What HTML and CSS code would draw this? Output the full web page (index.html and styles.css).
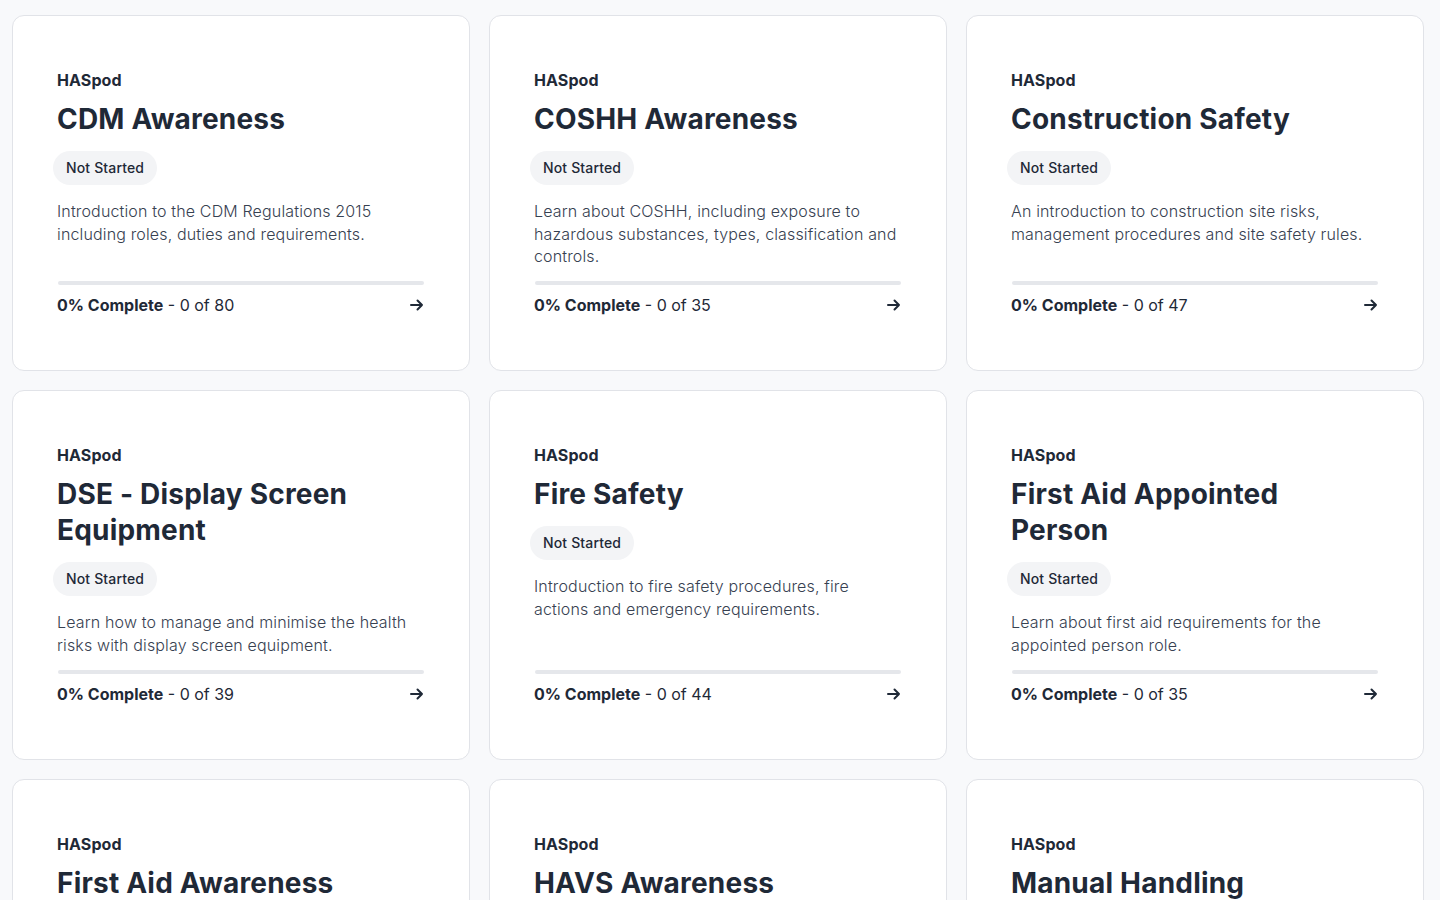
FILE: index.html
```html
<!DOCTYPE html>
<html lang="en">
<head>
<meta charset="utf-8">
<title>Courses</title>
<link rel="stylesheet" href="styles.css">
</head>
<body>
<main class="grid">
  <article class="card">
    <div class="provider">HASpod</div>
    <h2 class="title">CDM Awareness</h2>
    <span class="badge">Not Started</span>
    <p class="desc">Introduction to the CDM Regulations 2015 including roles, duties and requirements.</p>
    <div class="bar"></div>
    <div class="foot"><span><b>0% Complete</b> - 0 of 80</span><svg class="arrow" viewBox="0 0 14 12" width="14" height="12"><path d="M1 6h11M7.5 1.5L12 6l-4.5 4.5" fill="none" stroke="#1f2937" stroke-width="2" stroke-linecap="round" stroke-linejoin="round"/></svg></div>
  </article>
  <article class="card">
    <div class="provider">HASpod</div>
    <h2 class="title">COSHH Awareness</h2>
    <span class="badge">Not Started</span>
    <p class="desc">Learn about COSHH, including exposure to hazardous substances, types, classification and controls.</p>
    <div class="bar"></div>
    <div class="foot"><span><b>0% Complete</b> - 0 of 35</span><svg class="arrow" viewBox="0 0 14 12" width="14" height="12"><path d="M1 6h11M7.5 1.5L12 6l-4.5 4.5" fill="none" stroke="#1f2937" stroke-width="2" stroke-linecap="round" stroke-linejoin="round"/></svg></div>
  </article>
  <article class="card">
    <div class="provider">HASpod</div>
    <h2 class="title">Construction Safety</h2>
    <span class="badge">Not Started</span>
    <p class="desc">An introduction to construction site risks, management procedures and site safety rules.</p>
    <div class="bar"></div>
    <div class="foot"><span><b>0% Complete</b> - 0 of 47</span><svg class="arrow" viewBox="0 0 14 12" width="14" height="12"><path d="M1 6h11M7.5 1.5L12 6l-4.5 4.5" fill="none" stroke="#1f2937" stroke-width="2" stroke-linecap="round" stroke-linejoin="round"/></svg></div>
  </article>
  <article class="card">
    <div class="provider">HASpod</div>
    <h2 class="title">DSE - Display Screen Equipment</h2>
    <span class="badge">Not Started</span>
    <p class="desc">Learn how to manage and minimise the health risks with display screen equipment.</p>
    <div class="bar"></div>
    <div class="foot"><span><b>0% Complete</b> - 0 of 39</span><svg class="arrow" viewBox="0 0 14 12" width="14" height="12"><path d="M1 6h11M7.5 1.5L12 6l-4.5 4.5" fill="none" stroke="#1f2937" stroke-width="2" stroke-linecap="round" stroke-linejoin="round"/></svg></div>
  </article>
  <article class="card">
    <div class="provider">HASpod</div>
    <h2 class="title">Fire Safety</h2>
    <span class="badge">Not Started</span>
    <p class="desc">Introduction to fire safety procedures, fire actions and emergency requirements.</p>
    <div class="bar"></div>
    <div class="foot"><span><b>0% Complete</b> - 0 of 44</span><svg class="arrow" viewBox="0 0 14 12" width="14" height="12"><path d="M1 6h11M7.5 1.5L12 6l-4.5 4.5" fill="none" stroke="#1f2937" stroke-width="2" stroke-linecap="round" stroke-linejoin="round"/></svg></div>
  </article>
  <article class="card">
    <div class="provider">HASpod</div>
    <h2 class="title">First Aid Appointed Person</h2>
    <span class="badge">Not Started</span>
    <p class="desc">Learn about first aid requirements for the appointed person role.</p>
    <div class="bar"></div>
    <div class="foot"><span><b>0% Complete</b> - 0 of 35</span><svg class="arrow" viewBox="0 0 14 12" width="14" height="12"><path d="M1 6h11M7.5 1.5L12 6l-4.5 4.5" fill="none" stroke="#1f2937" stroke-width="2" stroke-linecap="round" stroke-linejoin="round"/></svg></div>
  </article>
  <article class="card">
    <div class="provider">HASpod</div>
    <h2 class="title">First Aid Awareness</h2>
    <span class="badge">Not Started</span>
    <p class="desc">Learn about first aid awareness and the essential skills needed in an emergency.</p>
    <div class="bar"></div>
    <div class="foot"><span><b>0% Complete</b> - 0 of 30</span><svg class="arrow" viewBox="0 0 14 12" width="14" height="12"><path d="M1 6h11M7.5 1.5L12 6l-4.5 4.5" fill="none" stroke="#1f2937" stroke-width="2" stroke-linecap="round" stroke-linejoin="round"/></svg></div>
  </article>
  <article class="card">
    <div class="provider">HASpod</div>
    <h2 class="title">HAVS Awareness</h2>
    <span class="badge">Not Started</span>
    <p class="desc">Learn about hand arm vibration syndrome, its causes, symptoms and prevention.</p>
    <div class="bar"></div>
    <div class="foot"><span><b>0% Complete</b> - 0 of 32</span><svg class="arrow" viewBox="0 0 14 12" width="14" height="12"><path d="M1 6h11M7.5 1.5L12 6l-4.5 4.5" fill="none" stroke="#1f2937" stroke-width="2" stroke-linecap="round" stroke-linejoin="round"/></svg></div>
  </article>
  <article class="card">
    <div class="provider">HASpod</div>
    <h2 class="title">Manual Handling</h2>
    <span class="badge">Not Started</span>
    <p class="desc">Learn about safe manual handling techniques and how to reduce the risk of injury.</p>
    <div class="bar"></div>
    <div class="foot"><span><b>0% Complete</b> - 0 of 36</span><svg class="arrow" viewBox="0 0 14 12" width="14" height="12"><path d="M1 6h11M7.5 1.5L12 6l-4.5 4.5" fill="none" stroke="#1f2937" stroke-width="2" stroke-linecap="round" stroke-linejoin="round"/></svg></div>
  </article>
</main>
</body>
</html>
```

FILE: styles.css
```css
* { box-sizing: border-box; }
html, body { margin: 0; padding: 0; }
body {
  background: #f8f9fb;
  font-family: Inter, "Noto Sans", sans-serif;
  color: #1f2937;
}
.grid {
  display: grid;
  grid-template-columns: repeat(3, 1fr);
  gap: 19px;
  padding: 15px 16px 0 12px;
}
.card {
  background: #fff;
  border: 1px solid #e1e3e8;
  border-radius: 12px;
  padding: 52px 45px 53px 44px;
  display: flex;
  flex-direction: column;
  align-items: flex-start;
}
.provider {
  font-size: 16px;
  line-height: 24px;
  font-weight: 700;
  color: #1f2937;
  letter-spacing: 0.1px;
}
.title {
  margin: 9px 0 0 0;
  font-size: 28px;
  line-height: 36px;
  font-weight: 700;
  color: #1f2937;
  letter-spacing: 0.2px;
}
.badge {
  margin: 14px 0 0 -4px;
  padding: 0 13px;
  height: 34px;
  line-height: 34px;
  border-radius: 17px;
  background: #f3f4f6;
  font-size: 14px;
  font-weight: 500;
  color: #1f2937;
  letter-spacing: 0.15px;
}
.desc {
  margin: 15px 0 13.5px 0;
  font-size: 16px;
  line-height: 22.5px;
  font-weight: 300;
  color: #374151;
  letter-spacing: 0.15px;
  flex-grow: 1;
}
.bar {
  align-self: stretch;
  height: 4px;
  border-radius: 2px;
  background: #e5e7eb;
  margin-left: 1px;
}
.foot {
  align-self: stretch;
  margin-top: 8px;
  display: flex;
  justify-content: space-between;
  align-items: center;
  font-size: 16px;
  line-height: 24px;
  font-weight: 400;
  color: #1f2937;
}
.foot b { font-weight: 700; }
.arrow { display: block; }
```
